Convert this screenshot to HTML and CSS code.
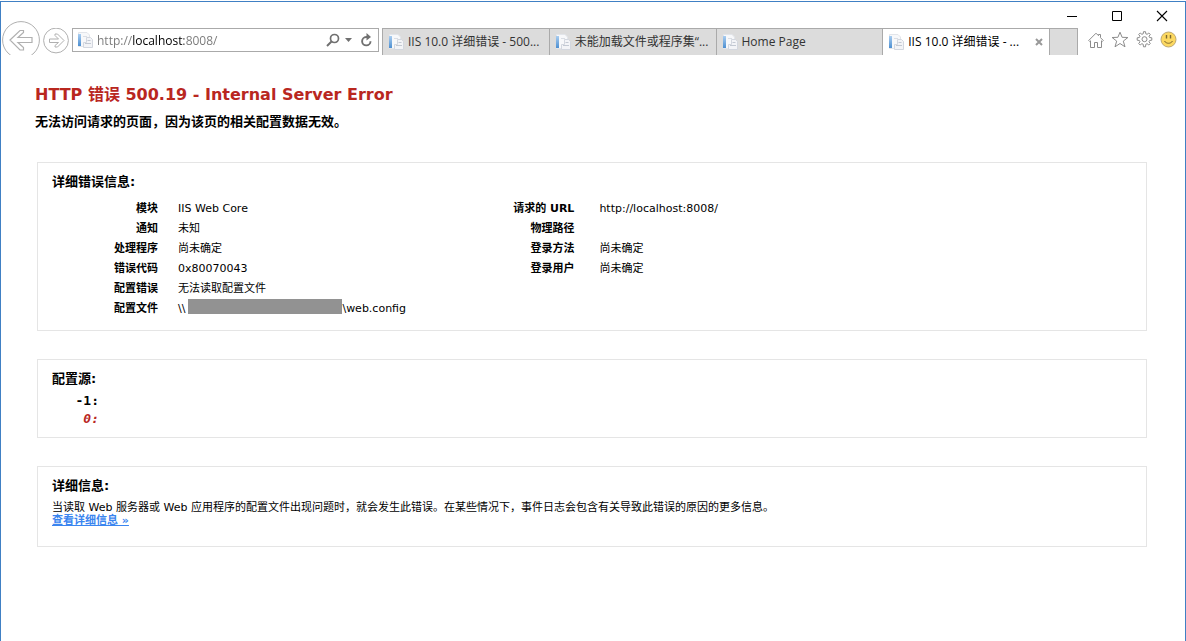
FILE: index.html
```html
<!DOCTYPE html>
<html lang="zh-CN">
<head>
<meta charset="utf-8">
<title>IIS 10.0 详细错误 - 500.19</title>
<link rel="stylesheet" href="styles.css">
</head>
<body>
<svg class="defs" aria-hidden="true">
  <defs>
    <linearGradient id="stripe" x1="0" y1="0" x2="0" y2="1"><stop offset="0" stop-color="#a9cdf0"/><stop offset="1" stop-color="#4d8fd1"/></linearGradient>
    <symbol id="page-icon" viewBox="0 0 16 16">
      <path d="M1.500 .500h8.500l2.500 2.500v11.500H1.500z" fill="#f7f8fa" stroke="#e2e5ea"/>
      <path d="M1 2h3v12H1z" fill="url(#stripe)"/>
      <path d="M6 4.500h4" stroke="#d9dde4"/>
      <path d="M9.500 5.500h4l2 2v8h-9v-5h3z" fill="#f3f4f7" stroke="#d3d7df"/>
      <path d="M8 11.500h6M10.500 8.500h3" stroke="#c3c9d3"/>
    </symbol>
  </defs>
</svg>
<div class="window">
  <header class="chrome">
    <div class="titlebar">
      <button class="win-btn" aria-label="最小化"><svg width="12" height="12" viewBox="0 0 12 12"><path d="M1 6.500h10" stroke="#000"/></svg></button>
      <button class="win-btn" aria-label="最大化"><svg width="12" height="12" viewBox="0 0 12 12"><path d="M1.500 1.500h9v9h-9z" fill="none" stroke="#000"/></svg></button>
      <button class="win-btn" aria-label="关闭"><svg width="12" height="12" viewBox="0 0 12 12"><path d="M1 1l10 10M11 1L1 11" stroke="#000" stroke-width="1.100"/></svg></button>
    </div>
    <div class="toolbar">
      <div class="history">
        <button class="nav-btn back" aria-label="后退"><svg width="38" height="34" viewBox="0 0 38 34" fill="none" stroke="#b0b0b0"><circle cx="19" cy="19" r="18.400"/><path d="M8 19L18 9.500h3.500v2L16 16.500h14v5H16l5.500 5v2.500H18z" stroke-width="1.200"/></svg></button>
        <button class="nav-btn forward" aria-label="前进"><svg width="26" height="27" viewBox="0 0 26 27" fill="none" stroke="#b0b0b0"><circle cx="13" cy="12.500" r="12.400"/><path d="M21 12.500L14.500 6H12v1.500l3.500 3.500H6.500v3.500h9L12 17.500V19h2.500z"/></svg></button>
      </div>
      <div class="address">
        <svg width="16" height="16"><use href="#page-icon"/></svg>
        <input class="url" type="text" aria-label="地址" value="http://localhost:8008/">
        <button class="addr-btn search" aria-label="搜索"><svg width="14" height="14" viewBox="0 0 14 14" fill="none" stroke="#707070"><circle cx="8.500" cy="5.500" r="4" stroke-width="1.700"/><path d="M5.500 8.500L1 13" stroke-width="2"/></svg></button>
        <button class="addr-btn drop" aria-label="显示地址列表"><svg width="7" height="4" viewBox="0 0 7 4"><path d="M0 0h7L3.500 4z" fill="#707070"/></svg></button>
        <button class="addr-btn reload" aria-label="刷新"><svg width="13" height="14" viewBox="0 0 13 14"><path d="M8 4H6.200a4.200 4.200 0 1 0 4.300 4.200" fill="none" stroke="#707070" stroke-width="1.900"/><path d="M6.500 0L11 4 6.500 7.500z" fill="#707070"/></svg></button>
      </div>
      <nav class="tabs" aria-label="选项卡">
        <button class="tab"><svg width="16" height="16"><use href="#page-icon"/></svg><span>IIS 10.0 详细错误 - 500...</span></button>
        <button class="tab"><svg width="16" height="16"><use href="#page-icon"/></svg><span>未能加载文件或程序集“...</span></button>
        <button class="tab"><svg width="16" height="16"><use href="#page-icon"/></svg><span>Home Page</span></button>
        <div class="tab active"><svg width="16" height="16"><use href="#page-icon"/></svg><span>IIS 10.0 详细错误 - ...</span><button class="tab-close" aria-label="关闭选项卡"><svg width="8" height="8" viewBox="0 0 8 8"><path d="M1 1l6 6M7 1L1 7" stroke="#999" stroke-width="2"/></svg></button></div>
        <button class="new-tab" aria-label="新建选项卡"></button>
      </nav>
      <div class="tools">
        <button aria-label="主页"><svg width="16" height="16" viewBox="0 0 16 16" fill="none" stroke="#8c8c8c"><path d="M.700 8.500L8 1.200l2.500 2.500V2.500h2v3.200l2.800 2.800-1 1-.800-.700v6.700h-4v-5h-3v5h-4V8.800l-.800.700z"/></svg></button>
        <button aria-label="收藏夹"><svg width="18" height="17" viewBox="0 0 18 17" fill="none" stroke="#8c8c8c"><path d="M9 1.200l2.100 5.100 5.800.200-4.600 3.600 1.700 5.700L9 12.500l-5 3.300 1.700-5.700L1.100 6.500l5.800-.200z"/></svg></button>
        <button aria-label="工具"><svg width="17" height="17" viewBox="0 0 17 17" fill="none" stroke="#8c8c8c"><path d="M7.200 2.800L7.500.700h2l.300 2.100 1.300.500 1.700-1.300 1.500 1.500L13 5.200l.600 1.300 2.200.300v2.400l-2.200.300-.600 1.300 1.300 1.700-1.500 1.500-1.700-1.300-1.300.600-.300 2.500h-2l-.300-2.500-1.300-.600L4.200 14l-1.500-1.500L4 10.800l-.600-1.300-2.200-.300V6.800l2.200-.300L4 5.200 2.700 3.500 4.200 2l1.700 1.300z"/><circle cx="8.500" cy="8.200" r="2.500"/></svg></button>
        <button aria-label="反馈"><svg width="17" height="17" viewBox="0 0 17 17"><circle cx="8.500" cy="8.500" r="7.500" fill="#fcd860" stroke="#bda873"/><path d="M6.500 4v3.500M10.500 4v3.500" stroke="#7d682f" stroke-width="1.400"/><path d="M4.500 10c1.500 3 6.500 3 8 0" fill="none" stroke="#7d682f"/></svg></button>
      </div>
    </div>
  </header>
  <main class="page">
    <h1>HTTP 错误 500.19 - Internal Server Error</h1>
    <p class="summary">无法访问请求的页面，因为该页的相关配置数据无效。</p>

    <section class="panel">
      <h2>详细错误信息:</h2>
      <div class="details">
        <table class="facts">
          <tr><th scope="row">模块</th><td>IIS Web Core</td></tr>
          <tr><th scope="row">通知</th><td>未知</td></tr>
          <tr><th scope="row">处理程序</th><td>尚未确定</td></tr>
          <tr><th scope="row">错误代码</th><td>0x80070043</td></tr>
          <tr><th scope="row">配置错误</th><td>无法读取配置文件</td></tr>
          <tr><th scope="row">配置文件</th><td><span class="path">\\<span class="redacted"></span>\web.config</span></td></tr>
        </table>
        <table class="facts request">
          <tr><th scope="row">请求的 URL</th><td>http://localhost:8008/</td></tr>
          <tr><th scope="row">物理路径</th><td></td></tr>
          <tr><th scope="row">登录方法</th><td>尚未确定</td></tr>
          <tr><th scope="row">登录用户</th><td>尚未确定</td></tr>
        </table>
      </div>
    </section>

    <section class="panel">
      <h2>配置源:</h2>
      <pre class="source">   -1: 
<em>    0: </em></pre>
    </section>

    <section class="panel">
      <h2>详细信息:</h2>
      <p class="info">当读取 Web 服务器或 Web 应用程序的配置文件出现问题时，就会发生此错误。在某些情况下，事件日志会包含有关导致此错误的原因的更多信息。</p>
      <a class="more" href="#">查看详细信息 »</a>
    </section>
  </main>
</div>
</body>
</html>
```
FILE: styles.css
```css
* { box-sizing: border-box; }
body {
  margin: 0;
  padding-top: 1px;
  background: #fff;
  color: #000;
  font: 11px/13px "DejaVu Sans", "Noto Sans CJK SC", sans-serif;
}
h1, h2, p, pre { margin: 0; }
button { padding: 0; border: 0; background: none; font: inherit; color: inherit; }
svg { display: block; flex: none; }
.defs { position: absolute; width: 0; height: 0; }

.window {
  min-height: calc(100vh - 1px);
  border: 1px solid #4080c4;
  border-bottom: 0;
}

/* Browser chrome */
.chrome { font: 12px/16px "Open Sans", "Noto Sans CJK SC", sans-serif; }
.titlebar { display: flex; justify-content: flex-end; height: 26px; padding-right: 1px; }
.win-btn { display: grid; place-items: center; width: 45px; height: 28px; }
.toolbar {
  display: grid;
  grid-template-columns: 71px 307fr 3px 696fr 107px;
  grid-template-rows: 27px;
}
.history {
  grid-column: 1;
  display: flex;
  align-items: flex-end;
  gap: 3px;
  margin-top: -7px;
  padding-left: 1px;
}
.address {
  grid-column: 2;
  display: flex;
  align-items: center;
  height: 24px;
  padding: 0 5px 0 4px;
  border: 1px solid #aaa;
}
.url {
  flex: 1;
  min-width: 0;
  height: 22px;
  padding: 0 0 0 4px;
  border: 0;
  outline: 0;
  font: inherit;
  color: transparent;
  background: linear-gradient(90deg, #777 40px, #000 40px, #000 91px, #777 91px);
  -webkit-background-clip: text;
  background-clip: text;
}
.addr-btn { display: grid; place-items: center; height: 22px; }
.drop { margin: 0 8px 0 5px; }

.tabs {
  grid-column: 4;
  display: grid;
  grid-template-columns: repeat(4, 167fr) 28fr;
  border-top: 1px solid #aaa;
  border-left: 1px solid #aaa;
}
.tab, .new-tab { border-right: 1px solid #aaa; background: #dcdcdc; min-width: 0; }
.tab {
  display: flex;
  align-items: center;
  gap: 4px;
  padding-left: 5px;
  color: #333;
  white-space: nowrap;
  overflow: hidden;
}
.tab.active { background: #fff; color: #000; }
.tab-close { margin: 0 6px 0 auto; }
.tools { grid-column: 5; display: flex; justify-content: space-between; padding: 3px 8px 0 10px; height: 20px; }
.tools button { display: grid; place-items: center; }

/* Error report */
.page { padding: 29px 38px 28px 36px; }
h1 { margin-left: -2px; color: #b9271f; font-size: 16px; line-height: 22px; }
.summary { margin: 6px 0 30px -2px; font-size: 13px; line-height: 20px; font-weight: bold; }
.panel { margin-bottom: 28px; padding: 9px 14px; border: 1px solid #e5e5e5; }
h2 { font-size: 13px; line-height: 20px; }
.details { display: grid; grid-template-columns: 38% 1fr; align-items: start; padding: 7px 0 2px; }
.facts { border-collapse: collapse; line-height: 20px; }
.facts th { width: 106px; padding: 0; text-align: right; white-space: nowrap; }
.facts td { height: 20px; padding: 0 0 0 20px; }
.request th { width: 112px; }
.request td { padding-left: 25px; }
.path { display: flex; align-items: flex-start; }
.redacted { width: 154px; height: 15px; margin-left: 3px; background: #929292; }
.source { padding: 3px 0 0; font: bold 13px/18px "DejaVu Sans Mono", monospace; }
.source em { color: #b9271f; }
.info { padding-top: 5px; }
.more { display: block; width: max-content; margin-bottom: 10px; color: #3a85ef; font-weight: bold; }
```
